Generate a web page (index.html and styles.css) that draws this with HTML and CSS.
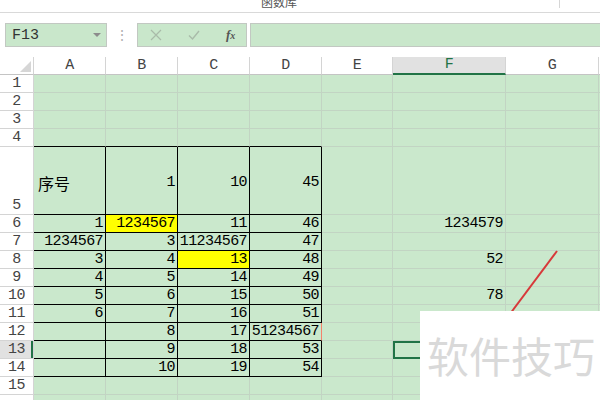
FILE: index.html
```html
<!DOCTYPE html>
<html lang="zh-CN">
<head>
  <meta charset="UTF-8" />
  <meta name="viewport" content="width=device-width, initial-scale=1.0"/>
  <title>工作表 - 函数库</title>
  <link rel="stylesheet" href="styles.css">
</head>
<body>
  <div class="app">
    <div class="ribbon">
      <span class="group-label">函数库</span>
      <span class="group-sep"></span>
    </div>

    <div class="formula-bar">
      <div class="name-box">
        <span>F13</span>
        <span class="caret"></span>
      </div>
      <div class="grip">⋮</div>
      <div class="fx-box">
        <svg class="ico" width="12" height="12" viewBox="0 0 12 12"><path d="M1 1L11 11M11 1L1 11" stroke="#a9bba9" stroke-width="1.2" fill="none"/></svg>
        <svg class="ico" width="12" height="12" viewBox="0 0 12 12"><path d="M1 6.5L4.5 10L11 2" stroke="#a9bba9" stroke-width="1.4" fill="none"/></svg>
        <span class="fx"><i>f</i><small>x</small></span>
      </div>
      <div class="formula-input"></div>
    </div>

    <table class="sheet">
      <colgroup>
        <col class="c-hdr"><col class="c-a"><col class="c-b"><col class="c-c"><col class="c-d">
        <col class="c-e"><col class="c-f"><col class="c-g"><col class="c-h">
      </colgroup>
      <tr class="col-head">
        <th class="corner"><span class="tri"></span></th>
        <th>A</th><th>B</th><th>C</th><th>D</th><th>E</th><th class="sel">F</th><th>G</th><th></th>
      </tr>
      <tr><th>1</th><td></td><td></td><td></td><td></td><td></td><td></td><td></td><td></td></tr>
      <tr><th>2</th><td></td><td></td><td></td><td></td><td></td><td></td><td></td><td></td></tr>
      <tr><th>3</th><td></td><td></td><td></td><td></td><td></td><td></td><td></td><td></td></tr>
      <tr><th>4</th><td class="bt"></td><td class="bt"></td><td class="bt"></td><td class="bt"></td><td></td><td></td><td></td><td></td></tr>
      <tr class="tall">
        <th>5</th>
        <td class="b txt">序号</td><td class="b">1</td><td class="b">10</td><td class="b">45</td>
        <td class="bl"></td><td></td><td></td><td></td>
      </tr>
      <tr><th>6</th><td class="b">1</td><td class="b hl">1234567</td><td class="b">11</td><td class="b">46</td><td class="bl"></td><td>1234579</td><td></td><td></td></tr>
      <tr><th>7</th><td class="b">1234567</td><td class="b">3</td><td class="b">11234567</td><td class="b">47</td><td class="bl"></td><td></td><td></td><td></td></tr>
      <tr><th>8</th><td class="b">3</td><td class="b">4</td><td class="b hl">13</td><td class="b">48</td><td class="bl"></td><td>52</td><td></td><td></td></tr>
      <tr><th>9</th><td class="b">4</td><td class="b">5</td><td class="b">14</td><td class="b">49</td><td class="bl"></td><td></td><td></td><td></td></tr>
      <tr><th>10</th><td class="b">5</td><td class="b">6</td><td class="b">15</td><td class="b">50</td><td class="bl"></td><td>78</td><td></td><td></td></tr>
      <tr><th>11</th><td class="b">6</td><td class="b">7</td><td class="b">16</td><td class="b">51</td><td class="bl"></td><td></td><td></td><td></td></tr>
      <tr><th>12</th><td class="b"></td><td class="b">8</td><td class="b">17</td><td class="b flag">51234567</td><td class="bl"></td><td></td><td></td><td></td></tr>
      <tr><th class="sel-row">13</th><td class="b"></td><td class="b">9</td><td class="b">18</td><td class="b">53</td><td class="bl"></td><td class="active"></td><td></td><td></td></tr>
      <tr><th>14</th><td class="b"></td><td class="b">10</td><td class="b">19</td><td class="b">54</td><td class="bl"></td><td></td><td></td><td></td></tr>
      <tr><th>15</th><td></td><td></td><td></td><td></td><td></td><td></td><td></td><td></td></tr>
      <tr><th></th><td></td><td></td><td></td><td></td><td></td><td></td><td></td><td></td></tr>
    </table>

    <!-- hand drawn annotation over the sheet -->
    <svg class="annot" width="600" height="400" viewBox="0 0 600 400">
      <line x1="557" y1="251" x2="498" y2="330" stroke="#d7393a" stroke-width="2"/>
    </svg>

    <div class="watermark">软件技巧</div>
  </div>
</body>
</html>
```

FILE: styles.css
```css
html, body {
  margin: 0;
  padding: 0;
  background: #fff;
  overflow: hidden;
}

.app {
  position: relative;
  width: 600px;
  height: 400px;
  overflow: hidden;
  font-family: "Liberation Mono", "Noto Sans CJK SC", monospace;
  color: #000;
}

/* ribbon strip (cut off at top) */
.ribbon {
  height: 12px;
  border-bottom: 1px solid #d9d9d9;
  display: flex;
  align-items: flex-end;
  overflow: hidden;
}

.group-label {
  margin-left: 261px;
  width: 40px;
  font-family: "Noto Sans CJK SC", sans-serif;
  font-size: 12px;
  line-height: 12px;
  margin-bottom: 4px;
  color: #555;
}

.group-sep {
  align-self: flex-start;
  margin-left: 258px;
  width: 1px;
  height: 8px;
  background: #d6d6d6;
}

/* formula bar */
.formula-bar {
  display: flex;
  align-items: center;
  padding: 10px 0 0 5px;
  margin-bottom: 10px;
  height: 24px;
}

.name-box,
.fx-box,
.formula-input {
  height: 24px;
  box-sizing: border-box;
  background: #c9e7cb;
  border: 1px solid #c2c8c2;
}

.name-box {
  width: 102px;
  display: flex;
  align-items: center;
  justify-content: space-between;
  padding: 0 5px 0 6px;
  font-size: 15px;
  color: #333;
}

.caret {
  width: 0;
  height: 0;
  border-left: 4px solid transparent;
  border-right: 4px solid transparent;
  border-top: 4px solid #8c8c8c;
}

.grip {
  width: 30px;
  text-align: center;
  color: #b0b0b0;
  font-size: 14px;
}

.fx-box {
  width: 110px;
  display: flex;
  align-items: center;
  padding-left: 12px;
  gap: 26px;
}

.fx {
  font-family: "Liberation Serif", serif;
  font-style: italic;
  font-weight: bold;
  font-size: 13px;
  color: #555;
  margin-left: 0;
}

.fx small {
  font-size: 10px;
}

.formula-input {
  flex: 1;
  margin-left: 3px;
  border-right: none;
}

/* sheet grid */
.sheet {
  border-collapse: separate;
  border-spacing: 0;
  table-layout: fixed;
  width: 620px;
}

.c-hdr { width: 34px; }
.c-a, .c-b, .c-c, .c-d { width: 72px; }
.c-e { width: 71px; }
.c-f { width: 113px; }
.c-g { width: 93px; }
.c-h { width: 22px; }

.sheet tr {
  height: 18px;
}

.sheet tr.tall {
  height: 68px;
}

.sheet th,
.sheet td {
  padding: 0;
  box-sizing: border-box;
  white-space: nowrap;
  overflow: hidden;
  font-size: 15px;
  letter-spacing: -0.6px;
  line-height: 16px;
}

.sheet th {
  background: #fff;
  color: #444;
  font-weight: normal;
  border-right: 1px solid #d4d4d4;
  border-bottom: 1px solid #d4d4d4;
  text-align: center;
  vertical-align: bottom;
}

.col-head th {
  border-bottom-color: #c4c4c4;
}

.corner {
  position: relative;
}

.tri {
  display: block;
  width: 0;
  height: 0;
  margin: 0 2px 2px auto;
  border-left: 11px solid transparent;
  border-bottom: 11px solid #d6d6d6;
}

.col-head th.sel {
  background: #e1e1e1;
  color: #217346;
  border-bottom: 2px solid #217346;
}

.sheet th.sel-row {
  background: #e1e1e1;
  box-shadow: inset -2px 0 #217346;
}

.sheet td {
  background: #cae8cc;
  border-right: 1px solid #c2d4c3;
  border-bottom: 1px solid #c2d4c3;
  text-align: right;
  vertical-align: bottom;
  padding-right: 2px;
}

.sheet td.b {
  border-right-color: #000;
  border-bottom-color: #000;
}

.sheet td.bt {
  border-bottom-color: #000;
}

.sheet td.hl {
  background: #ffff00;
}

.sheet td.flag {
  border-right-color: #f4826c;
}

.sheet tr.tall td {
  vertical-align: middle;
  padding-top: 4px;
}

.sheet td.txt {
  text-align: left;
  padding-left: 4px;
  font-family: "Noto Sans CJK SC", sans-serif;
  font-size: 16px;
  letter-spacing: 0;
}

.sheet td.active {
  outline: 2px solid #217346;
  outline-offset: -2px;
}

.annot {
  position: absolute;
  left: 0;
  top: 0;
  pointer-events: none;
}

.watermark {
  position: absolute;
  left: 420px;
  top: 311px;
  width: 180px;
  height: 89px;
  box-sizing: border-box;
  background: #fff;
  padding: 20px 0 0 7px;
  font-family: "Noto Sans CJK SC", sans-serif;
  font-size: 42px;
  line-height: 48px;
  color: #d9d9d9;
  white-space: nowrap;
}
```
